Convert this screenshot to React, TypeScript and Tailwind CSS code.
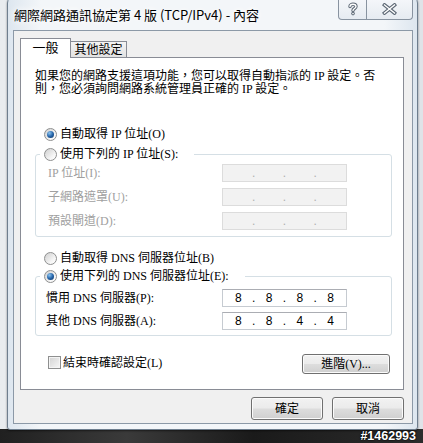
import React from 'react';

const bodyFont = "[font-family:'Liberation_Serif','Noto_Sans_CJK_TC',serif]";

const Radio: React.FC<{ checked?: boolean }> = ({ checked }) => (
  <span className="w-[13px] h-[13px] shrink-0 rounded-full border border-[#8e8f8f] bg-[linear-gradient(135deg,#cfcfcf,#f7f7f7_70%,#ffffff)] flex items-center justify-center">
    {checked && (
      <span className="w-[7px] h-[7px] rounded-full bg-[radial-gradient(circle_at_35%_30%,#8cc4f0,#2766aa_50%,#0c2f5c)]" />
    )}
  </span>
);

const IpBox: React.FC<{ parts?: string[] }> = ({ parts }) => {
  const enabled = !!parts;
  const cells = parts ?? ['', '', '', ''];
  return (
    <div
      className={
        enabled
          ? 'w-[125px] h-[18px] flex items-center border border-[#c6cbd1] border-t-[#abadb3] bg-white text-black text-[12px] [font-family:"Liberation_Sans",sans-serif]'
          : 'w-[125px] h-[18px] flex items-center border border-[#dcdcdc] bg-[#f2f2f2] text-[#b0b0b0] text-[12px] [font-family:"Liberation_Sans",sans-serif]'
      }
    >
      {cells.map((c, i) => (
        <React.Fragment key={i}>
          <span className="flex-1 text-center leading-[16px]">{c}</span>
          {i < 3 && <span className="w-0 flex justify-center leading-[16px]">.</span>}
        </React.Fragment>
      ))}
    </div>
  );
};

const WinButton: React.FC<{ label: string; w: string; h: string }> = ({ label, w, h }) => (
  <button
    className={`${w} ${h} rounded-[3px] border border-[#707070] bg-[linear-gradient(#f2f2f2_0%,#ebebeb_48%,#dddddd_52%,#cfcfcf_100%)] shadow-[inset_0_0_0_1px_#fbfbfb] text-[12px] text-black flex items-center justify-center ${bodyFont}`}
  >
    {label}
  </button>
);

const HelpIcon = () => (
  <svg width="12" height="14" viewBox="0 0 12 14">
    <path d="M3 4.5 C3 1.5 9 1.5 9 4.5 C9 6.5 6 6.5 6 8.5" fill="none" stroke="#5d6875" strokeWidth="3.4" strokeLinecap="round" />
    <circle cx="6" cy="11.6" r="1.8" fill="#5d6875" />
    <path d="M3 4.5 C3 1.5 9 1.5 9 4.5 C9 6.5 6 6.5 6 8.5" fill="none" stroke="#ffffff" strokeWidth="1.4" strokeLinecap="round" />
    <circle cx="6" cy="11.6" r="0.8" fill="#ffffff" />
  </svg>
);

const CloseIcon = () => (
  <svg width="15" height="12" viewBox="0 0 15 12">
    <path d="M2.5 2 L12.5 10 M12.5 2 L2.5 10" stroke="#5d6875" strokeWidth="3.6" strokeLinecap="square" />
    <path d="M2.5 2 L12.5 10 M12.5 2 L2.5 10" stroke="#ffffff" strokeWidth="1.4" strokeLinecap="square" />
  </svg>
);

export default function App() {
  return (
    <div className="relative w-[423px] h-[443px] overflow-hidden bg-[linear-gradient(90deg,#e9ecef,#dfe3e8)]">
      {/* desktop strip at the bottom */}
      <div className="absolute left-0 right-0 bottom-0 h-[14px] bg-[linear-gradient(90deg,#202020,#3a3a3a_30%,#1a1a1a_60%,#2c2c2c)]" />

      {/* dialog window */}
      <div className="absolute left-[7px] top-[-4px] w-[411px] h-[434px] flex flex-col rounded-t-[7px] rounded-b-[3px] border border-[#6e7e8e] bg-[linear-gradient(90deg,#dde6ef,#f3f6f9_8%,#f3f6f9_92%,#dde6ef)] shadow-[0_1px_2px_rgba(0,0,0,0.5)]">
        {/* title bar */}
        <div className="h-[33px] flex items-start shrink-0">
          <div className="flex-1 h-full flex items-center pl-[6px] pt-[3px] text-[13px] text-black [font-family:'Noto_Sans_CJK_TC',sans-serif] [text-shadow:0_0_6px_#ffffff,0_0_10px_#ffffff]">
            網際網路通訊協定第 4 版 (TCP/IPv4) - 內容
          </div>
          <div className="flex mr-[4px] h-[23px]">
            <div className="w-[29px] h-full flex items-center justify-center pt-[2px] border border-t-0 border-[#8893a0] rounded-bl-[4px] bg-[linear-gradient(#f6f8fb,#e6ebf1)]">
              <HelpIcon />
            </div>
            <div className="w-[46px] h-full flex items-center justify-center pt-[2px] border border-t-0 border-l-0 border-[#8893a0] rounded-br-[4px] bg-[linear-gradient(#f6f8fb,#e6ebf1)]">
              <CloseIcon />
            </div>
          </div>
        </div>

        {/* client area */}
        <div className={`ml-[5px] w-[400px] h-[394px] border border-[#8c99a7] bg-[#f0f0f0] pt-[7px] pl-[6px] flex flex-col text-[12px] text-black ${bodyFont}`}>
          {/* tabs */}
          <div className="flex items-end h-[19px]">
            <div className="relative z-10 -mb-px w-[51px] h-[20px] border border-b-0 border-[#898c95] bg-white flex items-center justify-center text-[13px] pb-[1px]">
              一般
            </div>
            <div className="w-[56px] h-[16px] border border-l-0 border-b-0 border-[#898c95] bg-[linear-gradient(#f4f4f4,#e2e2e2)] flex items-center justify-center">
              其他設定
            </div>
          </div>

          {/* tab panel */}
          <div className="w-[384px] h-[333px] border border-[#898c95] bg-white pt-[12px] flex flex-col">
            <p className="pl-[14px] leading-[13px] whitespace-nowrap">
              如果您的網路支援這項功能，您可以取得自動指派的 IP 設定。否
              <br />
              則，您必須詢問網路系統管理員正確的 IP 設定。
            </p>

            <div className="mt-[31px] pl-[23px] h-[14px] flex items-center gap-[3px]">
              <Radio checked />
              <span>自動取得 IP 位址(O)</span>
            </div>

            <fieldset className="mt-[6px] ml-[14px] w-[357px] border border-[#d5dfe5] rounded-[3px] pb-[6px]">
              <legend className="ml-[4px] pl-[4px] pr-[16px] h-[14px] flex items-center gap-[3px]">
                <Radio />
                <span>使用下列的 IP 位址(S):</span>
              </legend>
              <div className="pt-[3px] pl-[12px] flex flex-col gap-[6px] text-[#a0a0a0]">
                {['IP 位址(I):', '子網路遮罩(U):', '預設閘道(D):'].map((l) => (
                  <div key={l} className="flex items-center">
                    <span className="w-[174px]">{l}</span>
                    <IpBox />
                  </div>
                ))}
              </div>
            </fieldset>

            <div className="mt-[14px] pl-[23px] h-[14px] flex items-center gap-[3px]">
              <Radio />
              <span>自動取得 DNS 伺服器位址(B)</span>
            </div>

            <fieldset className="mt-[4px] ml-[14px] w-[357px] border border-[#d5dfe5] rounded-[3px] pb-[5px]">
              <legend className="ml-[4px] pl-[4px] pr-[16px] h-[14px] flex items-center gap-[3px]">
                <Radio checked />
                <span>使用下列的 DNS 伺服器位址(E):</span>
              </legend>
              <div className="pt-[6px] pl-[10px] flex flex-col gap-[5px]">
                <div className="flex items-center">
                  <span className="w-[176px]">慣用 DNS 伺服器(P):</span>
                  <IpBox parts={['8', '8', '8', '8']} />
                </div>
                <div className="flex items-center">
                  <span className="w-[176px]">其他 DNS 伺服器(A):</span>
                  <IpBox parts={['8', '8', '4', '4']} />
                </div>
              </div>
            </fieldset>

            <div className="mt-[18px] pl-[27px] pr-[13px] flex items-center justify-between">
              <div className="flex items-center gap-[2px] mt-[-3px]">
                <span className="w-[13px] h-[13px] border border-[#8e8f8f] bg-[linear-gradient(135deg,#d2d2d2,#f7f7f7)] shadow-[inset_0_0_0_1px_#f4f4f4]" />
                <span>結束時確認設定(L)</span>
              </div>
              <WinButton label="進階(V)..." w="w-[88px]" h="h-[20px]" />
            </div>
          </div>

          {/* dialog buttons */}
          <div className="mt-[7px] pr-[8px] flex justify-end gap-[9px]">
            <WinButton label="確定" w="w-[72px]" h="h-[23px]" />
            <WinButton label="取消" w="w-[72px]" h="h-[23px]" />
          </div>
        </div>
      </div>

      {/* watermark */}
      <div className="absolute right-[7px] bottom-[0px] text-[12.5px] leading-[14px] font-bold text-white [font-family:'Liberation_Sans',sans-serif] [text-shadow:0_0_2px_#000,0_0_1px_#000]">
        #1462993
      </div>
    </div>
  );
}
